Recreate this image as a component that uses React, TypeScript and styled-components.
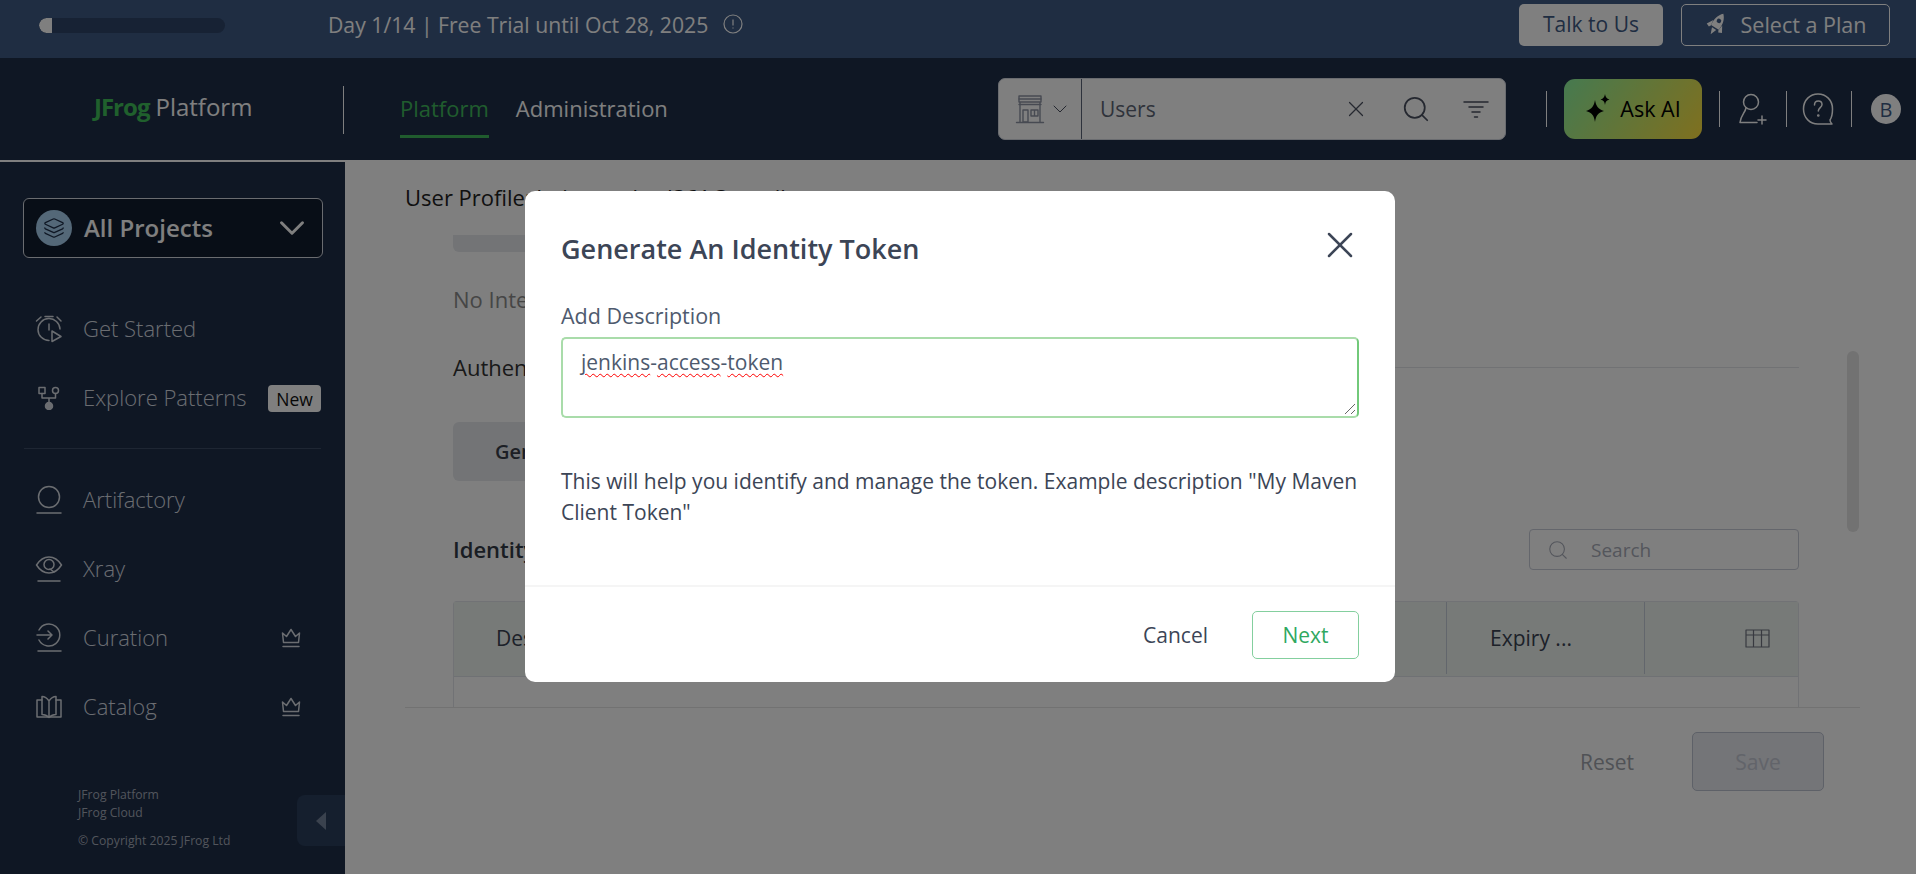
import React from "react";
import styled, { createGlobalStyle } from "styled-components";
import { Layers, ChevronDown, X, Search as SearchIcon } from "lucide-react";

const GlobalStyle = createGlobalStyle`
  html, body { margin: 0; padding: 0; height: 100%; background: #fff; }
  body { font-family: "Open Sans", "Noto Sans", sans-serif; overflow: hidden; }
  * { box-sizing: border-box; }
`;

const Page = styled.div`
  position: relative;
  width: 1916px;
  height: 874px;
  overflow: hidden;
  display: flex;
  flex-direction: column;
  background: #fff;
`;

/* top trial bar */
const TrialBar = styled.div`
  height: 58px;
  flex: none;
  background: #3e5a84;
  display: flex;
  align-items: center;
  padding: 0 26px 0 39px;
`;
const Progress = styled.div`
  width: 186px;
  height: 15px;
  border-radius: 8px;
  background: #2f4468;
  overflow: hidden;
  margin-top: -7px;
`;
const ProgressFill = styled.div`
  height: 100%;
  background: #fff;
  border-radius: 8px 0 0 8px;
`;
const TrialText = styled.span`
  margin-left: 103px;
  font-size: 21.2px;
  color: #fff;
  margin-top: -9px;
`;
const InfoIcon = styled.svg`
  margin-left: 15px;
  margin-top: -11px;
`;
const TrialActions = styled.div`
  margin-left: auto;
  display: flex;
  gap: 18px;
  margin-top: -8px;
`;
const TalkButton = styled.div`
  width: 144px;
  height: 42px;
  border-radius: 5px;
  background: #fff;
  color: #3e5a84;
  font-size: 21px;
  padding-bottom: 2px;
  display: flex;
  align-items: center;
  justify-content: center;
`;
const PlanButton = styled.div`
  width: 209px;
  height: 42px;
  border-radius: 5px;
  border: 1px solid #fff;
  color: #fff;
  font-size: 21.5px;
  padding-bottom: 2px;
  display: flex;
  align-items: center;
  justify-content: center;
  gap: 12px;
`;

/* header */
const Header = styled.div`
  height: 102px;
  flex: none;
  background: #1e2e48;
  display: flex;
  align-items: center;
`;
const LogoCell = styled.div`
  width: 344px;
  height: 48px;
  flex: none;
  display: flex;
  align-items: center;
  padding: 0 0 7px 94px;
  border-right: 1px solid #fff;
  margin-top: 1px;
  font-size: 24px;
  color: #fff;
`;
const LogoGreen = styled.span`
  color: #40c05a;
  font-weight: 700;
  margin-right: 6px;
  letter-spacing: -1px;
`;
const NavTabs = styled.div`
  display: flex;
  gap: 27px;
  margin-left: 56px;
  align-self: flex-end;
`;
const NavTab = styled.div<{ $active?: boolean }>`
  height: 55px;
  padding-top: 10px;
  font-size: 22px;
  font-weight: 500;
  color: ${(p) => (p.$active ? "#40b95c" : "#fff")};
  border-bottom: 3px solid ${(p) => (p.$active ? "#40b95c" : "transparent")};
  margin-bottom: 22px;
`;
const HeaderSearch = styled.div`
  margin-left: auto;
  width: 508px;
  height: 62px;
  background: #fff;
  border-radius: 7px;
  border: 1px solid #d4d8e0;
  display: flex;
  align-items: center;
  color: #4a5060;
`;
const SearchType = styled.div`
  width: 83px;
  height: 100%;
  flex: none;
  border-right: 1px solid #5a6478;
  display: flex;
  align-items: center;
  padding-left: 16px;
  gap: 3px;
`;
const SearchValue = styled.span`
  margin-left: 18px;
  font-size: 21px;
  color: #5e6676;
  flex: 1;
`;
const SearchIcons = styled.div`
  display: flex;
  align-items: center;
  gap: 32px;
  padding-right: 16px;
`;
const HeaderTools = styled.div`
  display: flex;
  align-items: center;
  margin-left: 40px;
  padding-right: 15px;
`;
const ToolDivider = styled.div<{ $left: number; $right: number }>`
  width: 1px;
  height: 36px;
  background: #fff;
  margin: 0 ${(p) => p.$right}px 0 ${(p) => p.$left}px;
`;
const AskButton = styled.div`
  width: 138px;
  height: 60px;
  border-radius: 11px;
  background: linear-gradient(125deg, #8cf4a0 0%, #ffe03e 100%);
  color: #000;
  font-size: 21.5px;
  font-weight: 500;
  padding-bottom: 2px;
  display: flex;
  align-items: center;
  justify-content: center;
  gap: 9px;
`;
const Avatar = styled.div`
  width: 30px;
  height: 30px;
  border-radius: 50%;
  background: #fff;
  color: #3e5a84;
  font-size: 20px;
  display: flex;
  align-items: center;
  justify-content: center;
`;

/* body */
const Body = styled.div`
  flex: 1;
  display: flex;
  min-height: 0;
`;
const Sidebar = styled.aside`
  position: relative;
  width: 345px;
  flex: none;
  background: #1e2e48;
  border-top: 2px solid #fff;
  padding: 36px 0 0;
  display: flex;
  flex-direction: column;
`;
const ProjectBox = styled.div`
  margin: 0 22px 0 23px;
  height: 60px;
  border-radius: 6px;
  border: 1px solid #d4d8e0;
  background: #111c2e;
  display: flex;
  align-items: center;
  padding: 0 9px 0 12px;
  color: #fff;
`;
const ProjectBadge = styled.div`
  width: 36px;
  height: 36px;
  border-radius: 50%;
  background: #a8d0f0;
  color: #1e2e48;
  display: flex;
  align-items: center;
  justify-content: center;
  margin-right: 12px;
`;
const ProjectName = styled.span`
  font-size: 24px;
  font-weight: 600;
  flex: 1;
  margin-top: -2px;
`;
const NavList = styled.div<{ $top: number }>`
  margin-top: ${(p) => p.$top}px;
  display: flex;
  flex-direction: column;
`;
const NavItem = styled.div`
  height: 69px;
  display: flex;
  align-items: center;
  padding: 0 24px 0 35px;
  font-size: 22px;
  font-weight: 300;
  color: #d6dbe2;
`;
const NavLabel = styled.span`
  margin-top: -2px;
`;
const NavIconSlot = styled.div`
  width: 28px;
  display: flex;
  justify-content: center;
  margin-right: 20px;
  flex: none;
`;
const NewBadge = styled.span`
  margin-left: auto;
  width: 53px;
  height: 27px;
  border-radius: 4px;
  background: #fff;
  color: #111;
  font-size: 17.5px;
  font-weight: 500;
  display: flex;
  align-items: center;
  justify-content: center;
  margin-top: 2px;
`;
const CrownSlot = styled.span`
  margin-left: auto;
  margin-right: 20px;
  display: flex;
`;
const SideDivider = styled.div`
  margin: 16px 24px 0;
  height: 1px;
  background: #3c4c66;
`;
const SideFooter = styled.div`
  margin-top: 45px;
  padding-left: 78px;
  font-size: 12.2px;
  line-height: 18px;
  color: #a4abb8;
`;
const Copyright = styled.div`
  margin-top: 10px;
`;
const CollapseTab = styled.div`
  position: absolute;
  right: 0;
  top: 633px;
  width: 48px;
  height: 51px;
  border-radius: 8px 0 0 8px;
  background: #2a3e5c;
  display: flex;
  align-items: center;
  justify-content: center;
`;
const Triangle = styled.div`
  width: 0;
  height: 0;
  border-top: 9px solid transparent;
  border-bottom: 9px solid transparent;
  border-right: 10px solid #75849c;
`;

/* main content behind the dialog */
const Main = styled.main`
  flex: 1;
  min-width: 0;
  position: relative;
  display: flex;
  flex-direction: column;
  padding: 22px 56px 0 60px;
`;
const PageTitle = styled.div`
  font-size: 22px;
  height: 53px;
  line-height: 30px;
  color: #222;
`;
const Scroller = styled.div`
  height: 472px;
  flex: none;
  overflow: hidden;
  padding: 0 61px 0 48px;
`;
const ClippedField = styled.div`
  width: 300px;
  height: 17px;
  border-radius: 0 0 6px 6px;
  background: #e6e8ec;
`;
const EmptyText = styled.div`
  margin-top: 32px;
  height: 30px;
  font-size: 22px;
  line-height: 30px;
  color: #8c8c8c;
`;
const SectionRow = styled.div`
  margin-top: 38px;
  display: flex;
  align-items: center;
  gap: 12px;
  height: 30px;
  font-size: 22px;
  color: #333;
`;
const SectionLine = styled.div`
  flex: 1;
  height: 1px;
  background: #e2e4e8;
`;
const GhostButton = styled.div`
  margin-top: 40px;
  width: 330px;
  height: 59px;
  border-radius: 6px;
  background: #e6e8ec;
  padding-left: 42px;
  font-size: 20px;
  font-weight: 600;
  line-height: 59px;
  color: #3a3f4a;
`;
const TableHeading = styled.div`
  margin-top: 48px;
  display: flex;
  align-items: center;
  justify-content: space-between;
  height: 41px;
`;
const TableTitle = styled.div`
  font-size: 22px;
  font-weight: 600;
  color: #333a46;
  margin-top: -2px;
`;
const TableSearch = styled.div`
  width: 270px;
  height: 41px;
  border: 1px solid #c8ccd8;
  border-radius: 4px;
  display: flex;
  align-items: center;
  padding-left: 17px;
  gap: 22px;
  color: #a8acb8;
  font-size: 19px;
`;
const Table = styled.div`
  margin-top: 31px;
  border: 1px solid #e2e4ea;
  border-bottom: none;
  border-radius: 4px 4px 0 0;
  height: 120px;
`;
const TableHead = styled.div`
  height: 75px;
  background: #eef4f1;
  border-bottom: 1px solid #dfe3e8;
  display: grid;
  grid-template-columns: 992px 198px 1fr;
  align-items: stretch;
  font-size: 21px;
  color: #3a4252;
`;
const HeadCell = styled.div<{ $first?: boolean }>`
  display: flex;
  align-items: center;
  padding-left: ${(p) => (p.$first ? 42 : 43)}px;
  border-left: ${(p) => (p.$first ? "none" : "1px solid #c4ccd8")};
  margin-bottom: 2px;
`;
const TableCorner = styled(HeadCell)`
  justify-content: flex-end;
  padding-right: 28px;
`;
const ScrollThumb = styled.div`
  position: absolute;
  right: 57px;
  top: 191px;
  width: 12px;
  height: 181px;
  border-radius: 6px;
  background: #e4e4e4;
`;
const FormFooter = styled.div`
  border-top: 1px solid #e4e4e4;
  height: 110px;
  display: flex;
  align-items: center;
  justify-content: flex-end;
  padding: 0 36px 2px 0;
  width: 1455px;
  font-size: 21px;
`;
const ResetText = styled.span`
  color: #a0a4ac;
  margin-right: 58px;
`;
const SaveButton = styled.div`
  width: 132px;
  height: 59px;
  border-radius: 5px;
  border: 1px solid #bcc2d0;
  background: #e8eaf0;
  color: #c4c8d4;
  display: flex;
  align-items: center;
  justify-content: center;
`;

/* dialog */
const Overlay = styled.div`
  position: absolute;
  inset: 0;
  background: rgba(0, 0, 0, 0.5);
  display: flex;
  align-items: center;
  justify-content: center;
  padding-left: 4px;
  padding-bottom: 1px;
`;
const Dialog = styled.div`
  width: 870px;
  height: 491px;
  background: #fff;
  border-radius: 10px;
  display: flex;
  flex-direction: column;
`;
const DialogBody = styled.div`
  flex: 1;
  padding: 38px 36px 0;
`;
const DialogHead = styled.div`
  display: flex;
  align-items: center;
  justify-content: space-between;
  height: 38px;
`;
const DialogTitle = styled.h2`
  margin: 0;
  font-size: 27px;
  font-weight: 600;
  color: #3c4556;
`;
const CloseButton = styled.div`
  display: flex;
  color: #3c4556;
  margin: -6px -3px 0 0;
`;
const FieldLabel = styled.label`
  display: block;
  margin-top: 35px;
  font-size: 21.5px;
  font-weight: 500;
  line-height: 28px;
  color: #4e5a6e;
`;
const DescriptionBox = styled.div`
  position: relative;
  margin-top: 7px;
  width: 798px;
  height: 81px;
  border: 2px solid #a9dcaa;
  border-right-color: #72c97a;
  border-radius: 5px;
  padding: 9px 18px;
  font-size: 21px;
  line-height: 28px;
  color: #4e5a6e;
`;
const Misspelled = styled.span`
  text-decoration: underline wavy #ff0000;
  text-decoration-thickness: 1.4px;
  text-underline-offset: 3px;
`;
const ResizeGrip = styled.svg`
  position: absolute;
  right: 1px;
  bottom: 1px;
`;
const HelpText = styled.p`
  margin: 48px 0 0;
  width: 800px;
  font-size: 21px;
  line-height: 31px;
  color: #3c4556;
`;
const DialogFooter = styled.div`
  height: 97px;
  flex: none;
  border-top: 2px solid #f5f5f5;
  display: flex;
  align-items: center;
  justify-content: flex-end;
  padding: 0 36px 0 0;
  font-size: 21px;
`;
const CancelText = styled.span`
  color: #3c4556;
  font-weight: 500;
  margin-right: 44px;
`;
const NextButton = styled.div`
  width: 107px;
  height: 48px;
  border-radius: 5px;
  border: 1.5px solid #84cf9e;
  color: #2fa85f;
  font-weight: 500;
  display: flex;
  align-items: center;
  justify-content: center;
`;

/* drawn icons */
const Line = {
  fill: "none",
  stroke: "currentColor",
  strokeWidth: 1.5,
  strokeLinecap: "round" as const,
  strokeLinejoin: "round" as const,
};

const RocketIcon = () => (
  <svg width="24" height="24" viewBox="0 0 24 24" fill="currentColor">
    <g transform="rotate(32 12 12)">
      <path
        fillRule="evenodd"
        d="M12 0c4 4 5.500 9 4.500 16h-9C6.500 9 8 4 12 0zm0 6a2.300 2.300 0 1 0 0 4.600A2.300 2.300 0 0 0 12 6z"
      />
      <path d="M6.800 10.500L3 17l3.500 1.500 1-2zM17.200 10.500L21 17l-3.500 1.500-1-2zM9.500 17.500h5L12 24z" />
    </g>
  </svg>
);

const StoreIcon = () => (
  <svg width="30" height="30" viewBox="0 0 30 30" {...Line} strokeWidth={1.4} color="#8e94a4">
    <path d="M4 2h22v6H4zM5 8v20M25 8v20M1.500 28.500h27" />
    <path d="M4 5h22M4 10.500h22" />
    <path d="M8 16h5v12H8zM16 16h7v6h-7zM19.500 16v6" />
  </svg>
);

const FilterIcon = () => (
  <svg width="26" height="18" viewBox="0 0 26 18" {...Line} color="#4a5060">
    <path d="M1 2h24M6 7h14M9 12h8M11.500 17h3" />
  </svg>
);

const SparkleIcon = () => (
  <svg width="26" height="28" viewBox="0 0 26 28" fill="#000">
    <path d="M10 6c1 6 3 9 9 11-6 1.500-8 4.500-9 11-1-6.500-3-9.500-9-11 6-2 8-5 9-11z" />
    <path d="M20 0c.5 3 1.500 4.500 4.500 5.500-3 .8-4 2.200-4.500 5.500-.5-3.300-1.500-4.700-4.500-5.500 3-1 4-2.500 4.500-5.500z" />
  </svg>
);

const UserPlusIcon = () => (
  <svg width="34" height="32" viewBox="0 0 34 32" {...Line} color="#fff">
    <circle cx="15" cy="9" r="7.500" />
    <path d="M10 15c-1 5-5 7-6 14.500h17M26 23v8M22 27h8" />
  </svg>
);

const HelpIcon = () => (
  <svg width="32" height="32" viewBox="0 0 32 32" {...Line} color="#fff">
    <path d="M28 27c2-3 2.500-7 2.500-11C30.500 7 24 1 16 1S1.500 7 1.500 16 8 31 16 31h14c-1-1-2-2.500-2-4z" />
    <path d="M12.500 12c0-2.500 1.500-4 3.800-4s3.700 1.500 3.700 3.500c0 3-3.700 3.200-3.700 6.500" />
    <circle cx="16.300" cy="22.500" r=".6" />
  </svg>
);

const StartedIcon = () => (
  <svg width="28" height="28" viewBox="0 0 28 28" {...Line}>
    <path d="M14 25.500A11 11 0 1 1 25 14M1.500 6L6 2M10 1.500h8M26 6l-4-4M14 9v6" />
    <path d="M17 16l9 5.500-9 5z" />
  </svg>
);

const PatternIcon = () => (
  <svg width="24" height="24" viewBox="0 0 24 24" {...Line}>
    <rect x="2" y="1.500" width="6" height="6" />
    <circle cx="18.500" cy="4.500" r="3" />
    <path d="M5 7.500v4.500h13.500V7.500M12 12v6" />
    <circle cx="12" cy="20" r="3.500" fill="currentColor" />
  </svg>
);

const ArtifactoryIcon = () => (
  <svg width="28" height="30" viewBox="0 0 28 30" {...Line}>
    <circle cx="14" cy="12" r="10.500" />
    <path d="M2 28h24" />
  </svg>
);

const XrayIcon = () => (
  <svg width="28" height="30" viewBox="0 0 28 30" {...Line}>
    <path d="M1.500 11C5 5.500 9 3 14 3s9 2.500 12.500 8C23 16.500 19 19 14 19S5 16.500 1.500 11z" />
    <circle cx="14" cy="10.500" r="5" />
    <path d="M15 15l4 3M3 27h22" />
  </svg>
);

const CurationIcon = () => (
  <svg width="28" height="30" viewBox="0 0 28 30" {...Line}>
    <path d="M4 7a11 11 0 1 1 0 10M2 12h15M13 8l4 4-4 4M3 28h23" />
  </svg>
);

const CatalogIcon = () => (
  <svg width="28" height="24" viewBox="0 0 28 24" {...Line}>
    <path d="M14 6C12 3 9 1.500 7 1.500v18c3 0 5 1 7 3 2-2 4-3 7-3v-18c-2 0-5 1.500-7 4.500zM14 6v16.500" />
    <path d="M7 5H2v17h12M21 5h5v17H14" />
  </svg>
);

const CrownIcon = () => (
  <svg width="20" height="20" viewBox="0 0 20 20" {...Line}>
    <path d="M1.500 5l4 3.500L10 1.500l4.500 7 4-3.500-1 9.500h-15zM2 18.500h16" />
  </svg>
);

const TableColumnsIcon = () => (
  <svg width="25" height="19" viewBox="0 0 25 19" {...Line} strokeWidth={1.2} strokeLinecap="butt" color="#707480">
    <rect x="1" y="1" width="23" height="17" />
    <path d="M1 6h23M8.500 1v17M16.500 1v17" />
  </svg>
);

const sideTop = [
  { label: "Get Started", icon: <StartedIcon /> },
  { label: "Explore Patterns", icon: <PatternIcon />, isNew: true },
];
const sideBottom = [
  { label: "Artifactory", icon: <ArtifactoryIcon /> },
  { label: "Xray", icon: <XrayIcon /> },
  { label: "Curation", icon: <CurationIcon />, paid: true },
  { label: "Catalog", icon: <CatalogIcon />, paid: true },
];

const SideLink = ({ item }: { item: any }) => (
  <NavItem>
    <NavIconSlot>{item.icon}</NavIconSlot>
    <NavLabel>{item.label}</NavLabel>
    {item.isNew && <NewBadge>New</NewBadge>}
    {item.paid && (
      <CrownSlot>
        <CrownIcon />
      </CrownSlot>
    )}
  </NavItem>
);

export default function App() {
  return (
    <Page>
      <GlobalStyle />
      <TrialBar>
        <Progress>
          <ProgressFill style={{ width: `${(1 / 14) * 100}%` }} />
        </Progress>
        <TrialText>Day 1/14 | Free Trial until Oct 28, 2025</TrialText>
        <InfoIcon width="20" height="20" viewBox="0 0 20 20" fill="none" stroke="#fff" strokeWidth="1.2">
          <circle cx="10" cy="10" r="9" />
          <path d="M10 5.500v6M10 13.500v1" />
        </InfoIcon>
        <TrialActions>
          <TalkButton>Talk to Us</TalkButton>
          <PlanButton>
            <RocketIcon />
            Select a Plan
          </PlanButton>
        </TrialActions>
      </TrialBar>

      <Header>
        <LogoCell>
          <LogoGreen>JFrog</LogoGreen> Platform
        </LogoCell>
        <NavTabs>
          <NavTab $active>Platform</NavTab>
          <NavTab>Administration</NavTab>
        </NavTabs>
        <HeaderSearch>
          <SearchType>
            <StoreIcon />
            <ChevronDown size={24} strokeWidth={1} />
          </SearchType>
          <SearchValue>Users</SearchValue>
          <SearchIcons>
            <X size={26} strokeWidth={1.1} />
            <SearchIcon size={30} strokeWidth={1.4} />
            <FilterIcon />
          </SearchIcons>
        </HeaderSearch>
        <HeaderTools>
          <ToolDivider $left={0} $right={17} />
          <AskButton>
            <SparkleIcon />
            Ask AI
          </AskButton>
          <ToolDivider $left={17} $right={16} />
          <UserPlusIcon />
          <ToolDivider $left={16} $right={15} />
          <HelpIcon />
          <ToolDivider $left={17} $right={19} />
          <Avatar>B</Avatar>
        </HeaderTools>
      </Header>

      <Body>
        <Sidebar>
          <ProjectBox>
            <ProjectBadge>
              <Layers size={22} strokeWidth={1.4} />
            </ProjectBadge>
            <ProjectName>All Projects</ProjectName>
            <ChevronDown size={42} strokeWidth={1.7} />
          </ProjectBox>
          <NavList $top={36}>
            {sideTop.map((item) => (
              <SideLink key={item.label} item={item} />
            ))}
          </NavList>
          <SideDivider />
          <NavList $top={16}>
            {sideBottom.map((item) => (
              <SideLink key={item.label} item={item} />
            ))}
          </NavList>
          <SideFooter>
            <div>JFrog Platform</div>
            <div>JFrog Cloud</div>
            <Copyright>© Copyright 2025 JFrog Ltd</Copyright>
          </SideFooter>
          <CollapseTab>
            <Triangle />
          </CollapseTab>
        </Sidebar>

        <Main>
          <PageTitle>User Profile: bejoymethod361@gmail.com</PageTitle>
          <Scroller>
            <ClippedField />
            <EmptyText>No Integrations</EmptyText>
            <SectionRow>
              Authentication Settings
              <SectionLine />
            </SectionRow>
            <GhostButton>Generate an Identity Token</GhostButton>
            <TableHeading>
              <TableTitle>Identity Tokens</TableTitle>
              <TableSearch>
                <SearchIcon size={22} strokeWidth={1.2} />
                Search
              </TableSearch>
            </TableHeading>
            <Table>
              <TableHead>
                <HeadCell $first>Description</HeadCell>
                <HeadCell>Expiry ...</HeadCell>
                <TableCorner>
                  <TableColumnsIcon />
                </TableCorner>
              </TableHead>
            </Table>
          </Scroller>
          <FormFooter>
            <ResetText>Reset</ResetText>
            <SaveButton>Save</SaveButton>
          </FormFooter>
          <ScrollThumb />
        </Main>
      </Body>

      <Overlay>
        <Dialog>
          <DialogBody>
            <DialogHead>
              <DialogTitle>Generate An Identity Token</DialogTitle>
              <CloseButton>
                <X size={44} strokeWidth={1.35} />
              </CloseButton>
            </DialogHead>
            <FieldLabel>Add Description</FieldLabel>
            <DescriptionBox>
              <Misspelled>jenkins</Misspelled>-<Misspelled>access</Misspelled>-<Misspelled>token</Misspelled>
              <ResizeGrip width="12" height="12" viewBox="0 0 12 12" stroke="#666" strokeWidth="1">
                <path d="M1 11L11 1M7 11l4-4" />
              </ResizeGrip>
            </DescriptionBox>
            <HelpText>
              This will help you identify and manage the token. Example description "My Maven Client Token"
            </HelpText>
          </DialogBody>
          <DialogFooter>
            <CancelText>Cancel</CancelText>
            <NextButton>Next</NextButton>
          </DialogFooter>
        </Dialog>
      </Overlay>
    </Page>
  );
}
